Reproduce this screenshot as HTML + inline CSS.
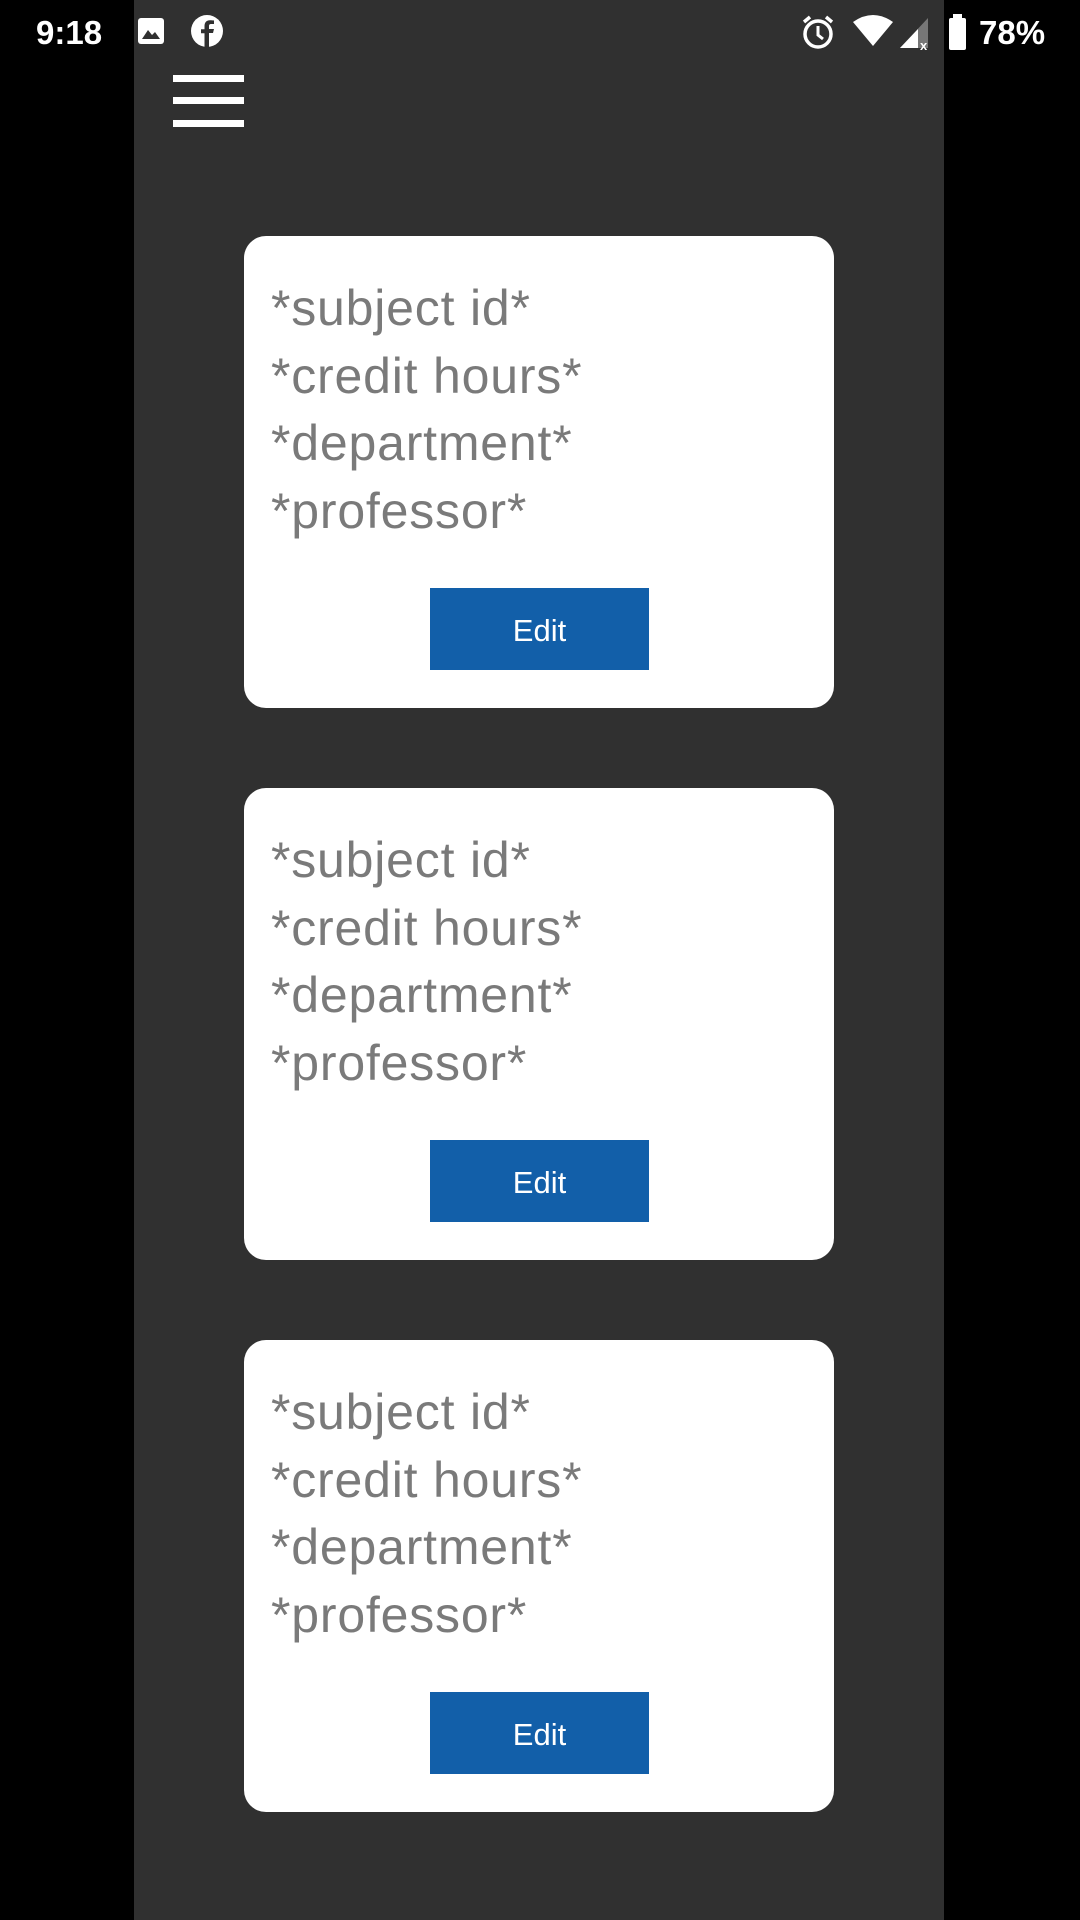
<!DOCTYPE html>
<html><head><meta charset="utf-8"><style>
body{margin:0;width:1080px;height:1920px;background:#000;position:relative;overflow:hidden;font-family:"Liberation Sans",sans-serif}
.panel{position:absolute;left:134px;top:0;width:810px;height:1920px;background:#303030}
.sb{position:absolute;color:#fff;font-size:33px;top:14px}
.bar{position:absolute;left:173px;width:71px;height:7px;background:#fff}
.card{position:absolute;left:244px;width:590px;height:472px;background:#fff;border-radius:22px}
.txt{position:absolute;left:27px;top:39px;color:#7a7a7a;font-size:50px;line-height:67.5px;letter-spacing:0.8px}
.btn{position:absolute;left:186px;top:352px;width:219px;height:82px;background:#125fa9;color:#fff;font-size:31px;text-align:center;line-height:86px}
</style></head><body>
<div class="panel"></div>
<div class="sb" style="left:36px;font-weight:bold">9:18</div>
<svg style="position:absolute;left:137px;top:17px" width="28" height="28" viewBox="0 0 28 28"><rect x="1" y="1" width="26" height="26" rx="3" fill="#fff"/><path d="M5 22 L11 13 L15 18 L18 15 L23 22Z" fill="#303030"/></svg>
<svg style="position:absolute;left:190px;top:14px" width="34" height="34" viewBox="0 0 34 34"><circle cx="17" cy="17" r="16" fill="#fff"/><path d="M19 33 V19 h4 l1-4 h-5 v-3 c0-1.5 .7-2 2-2 h3 V6.5 c-1-.2-2.5-.3-4-.3 -4 0-5.5 2.5-5.5 6 v3 H11 v4 h3.5 V33Z" fill="#303030"/></svg>
<svg style="position:absolute;left:801px;top:14px" width="34" height="36" viewBox="0 0 34 36"><circle cx="17" cy="20" r="13" fill="none" stroke="#fff" stroke-width="3.5"/><path d="M17 12 V21 L22 25" stroke="#fff" stroke-width="3" fill="none"/><path d="M3 8 L9 3 M31 8 L25 3" stroke="#fff" stroke-width="3.5"/></svg>
<svg style="position:absolute;left:852px;top:14px" width="42" height="34" viewBox="0 0 42 34"><path d="M1 8 Q21 -6 41 8 L21 32Z" fill="#fff"/></svg>
<svg style="position:absolute;left:898px;top:16px" width="34" height="34" viewBox="0 0 34 34"><path d="M2 32 L30 2 V32Z" fill="#777"/><path d="M2 32 L20 13 V32Z" fill="#fff"/><text x="22" y="34" fill="#fff" font-size="13" font-family="Liberation Sans" font-weight="bold">x</text></svg>
<svg style="position:absolute;left:947px;top:14px" width="22" height="36" viewBox="0 0 22 36"><rect x="6" y="0" width="9" height="5" fill="#fff"/><rect x="2" y="4" width="17" height="32" rx="2" fill="#fff"/></svg>
<div class="sb" style="left:979px;font-weight:bold">78%</div>
<div class="bar" style="top:75px"></div><div class="bar" style="top:97px"></div><div class="bar" style="top:120px"></div>
<div class="card" style="top:236px"><div class="txt">*subject id*<br>*credit hours*<br>*department*<br>*professor*</div><div class="btn">Edit</div></div>
<div class="card" style="top:788px"><div class="txt">*subject id*<br>*credit hours*<br>*department*<br>*professor*</div><div class="btn">Edit</div></div>
<div class="card" style="top:1340px"><div class="txt">*subject id*<br>*credit hours*<br>*department*<br>*professor*</div><div class="btn">Edit</div></div>
</body></html>
